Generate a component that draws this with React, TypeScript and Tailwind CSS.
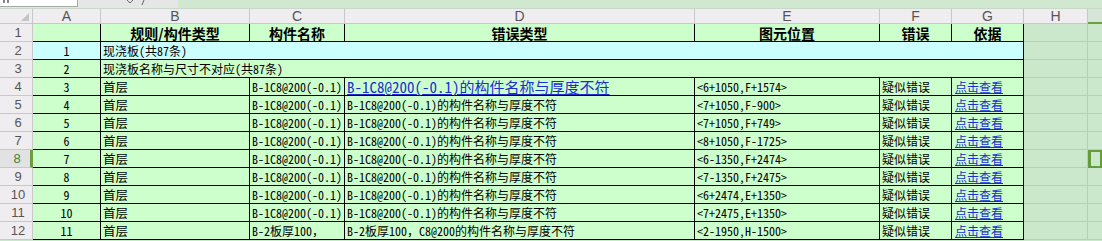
import React from 'react';

const grid = "grid grid-cols-[33px_68px_149px_95px_350px_185px_72px_72px_64px_14px]";
const mono = { fontFamily: '"Noto Sans Mono CJK SC", "Noto Sans CJK SC", monospace' };
const hdrFont = { fontFamily: '"Liberation Sans", Arial, sans-serif' };
const boldFont = { fontFamily: '"Noto Sans CJK SC", sans-serif' };

const rows = [
  { n: 3, c: "B-1C8@200(-0.1)", d: "B-1C8@200(-0.1)的构件名称与厚度不符", e: "<6+1050,F+1574>" },
  { n: 4, c: "B-1C8@200(-0.1)", d: "B-1C8@200(-0.1)的构件名称与厚度不符", e: "<7+1050,F-900>" },
  { n: 5, c: "B-1C8@200(-0.1)", d: "B-1C8@200(-0.1)的构件名称与厚度不符", e: "<7+1050,F+749>" },
  { n: 6, c: "B-1C8@200(-0.1)", d: "B-1C8@200(-0.1)的构件名称与厚度不符", e: "<8+1050,F-1725>" },
  { n: 7, c: "B-1C8@200(-0.1)", d: "B-1C8@200(-0.1)的构件名称与厚度不符", e: "<6-1350,F+2474>" },
  { n: 8, c: "B-1C8@200(-0.1)", d: "B-1C8@200(-0.1)的构件名称与厚度不符", e: "<7-1350,F+2475>" },
  { n: 9, c: "B-1C8@200(-0.1)", d: "B-1C8@200(-0.1)的构件名称与厚度不符", e: "<6+2474,E+1350>" },
  { n: 10, c: "B-1C8@200(-0.1)", d: "B-1C8@200(-0.1)的构件名称与厚度不符", e: "<7+2475,E+1350>" },
  { n: 11, c: "B-2板厚100，", d: "B-2板厚100，C8@200的构件名称与厚度不符", e: "<2-1950,H-1500>" },
];

function RowHead({ n, active }: { n: number; active?: boolean }) {
  return (
    <div
      style={hdrFont}
      className={
        active
          ? "flex items-center justify-center pl-1 text-[13px] leading-none text-[#4b7f2a] bg-[#e2e2e2] border-b border-[#c8c8c8] border-r-[3px] border-r-[#6a9e3f]"
          : "flex items-center justify-center pl-1 text-[13px] leading-none text-[#555] bg-[#efedf0] border-r border-b border-[#c8c8c8]"
      }
    >
      {n}
    </div>
  );
}

function Empty({ selected }: { selected?: boolean }) {
  return (
    <>
      <div className="bg-[#cce8cc] border-r border-b border-[#b3d3b3]" />
      {selected ? (
        <div className="bg-[#cce8cc] border-2 border-l-[3px] border-[#649c3c]" />
      ) : (
        <div className="bg-[#cce8cc] border-b border-[#b3d3b3]" />
      )}
    </>
  );
}

const cell = "flex items-center border-r border-b border-black whitespace-nowrap overflow-hidden leading-[16px]";

export default function App() {
  return (
    <div className="w-[1102px] h-[241px] overflow-hidden bg-[#cce8cc] text-[12px] text-black" style={mono}>
      {/* formula bar strip (only its lower edge is visible) */}
      <div className="flex h-[9px] border-b border-[#c9d9c9] bg-[#e6e6e6]">
        <div className="w-[78px] h-[7px] bg-white border-r border-b border-[#a9a9a9] pl-[3px]">
          <svg width="8" height="4" viewBox="0 0 8 4">
            <path d="M1 0V3M5 0V3" stroke="#333" strokeWidth="1.2" />
          </svg>
        </div>
        <div className="w-[100px] h-[8px] flex gap-[6px] pl-[48px]">
          <svg width="8" height="4" viewBox="0 0 8 4">
            <path d="M1 0L4 3L7 0" stroke="#666" strokeWidth="1" fill="none" />
          </svg>
          <svg width="6" height="5" viewBox="0 0 6 5">
            <path d="M4 0L2 5" stroke="#666" strokeWidth="1" />
          </svg>
        </div>
        <div className="flex-1 h-[8px] bg-[#cfe8cf]" />
      </div>

      {/* column letters */}
      <div className={`${grid} h-[15px] text-[14px] text-[#555]`} style={hdrFont}>
        <div className="relative bg-[#efedf0] border-r border-b border-[#c8c8c8]">
          <svg className="absolute right-[3px] bottom-[2px]" width="8" height="8" viewBox="0 0 8 8">
            <polygon points="8,0 8,8 0,8" fill="#c4c4c4" />
          </svg>
        </div>
        {["A", "B", "C", "D", "E", "F", "G", "H"].map((l) => (
          <div key={l} className="flex items-center justify-center bg-[#efedf0] border-r border-b border-[#c8c8c8] leading-none">
            {l}
          </div>
        ))}
        <div className="bg-[#d6e6d6] border-b-2 border-[#6a9e3f]" />
      </div>

      {/* row 1: headers */}
      <div className={`${grid} h-[18px]`}>
        <RowHead n={1} />
        <div className={`${cell} bg-[#ccffcc]`} />
        {["规则/构件类型", "构件名称", "错误类型", "图元位置", "错误", "依据"].map((h) => (
          <div key={h} style={boldFont} className={`${cell} justify-center bg-[#ccffcc] font-bold text-[14px]`}>
            {h}
          </div>
        ))}
        <Empty />
      </div>

      {/* row 2 */}
      <div className={`${grid} h-[18px]`}>
        <RowHead n={2} />
        <div className={`${cell} justify-center bg-[#ccffff]`}>1</div>
        <div className={`${cell} col-span-6 pl-[2px] bg-[#ccffff]`}>现浇板(共87条)</div>
        <Empty />
      </div>

      {/* row 3 */}
      <div className={`${grid} h-[18px]`}>
        <RowHead n={3} />
        <div className={`${cell} justify-center bg-[#ccffcc]`}>2</div>
        <div className={`${cell} col-span-6 pl-[2px] bg-[#ccffcc]`}>现浇板名称与尺寸不对应(共87条)</div>
        <Empty />
      </div>

      {rows.map((r, i) => (
        <div key={r.n} className={`${grid} h-[18px]`}>
          <RowHead n={r.n + 1} active={r.n + 1 === 8} />
          <div className={`${cell} justify-center bg-[#ccffcc]`}>{r.n}</div>
          <div className={`${cell} pl-[2px] bg-[#ccffcc] text-[12.5px]`}>首层</div>
          <div className={`${cell} pl-[2px] bg-[#ccffcc]`}>{r.c}</div>
          {i === 0 ? (
            <div className="flex items-center border-r border-b border-black whitespace-nowrap pl-[2px] bg-[#ccffcc] text-[15px] leading-[17px] text-[#1a2fd0] underline underline-offset-[1px]">
              {r.d}
            </div>
          ) : (
            <div className={`${cell} pl-[2px] bg-[#ccffcc]`}>{r.d}</div>
          )}
          <div className={`${cell} pl-[2px] bg-[#ccffcc]`}>{r.e}</div>
          <div className={`${cell} pl-[2px] bg-[#ccffcc]`}>疑似错误</div>
          <div className={`${cell} pl-[3px] bg-[#ccffcc] text-[#1a2fd0] underline`}>点击查看</div>
          <Empty selected={r.n + 1 === 8} />
        </div>
      ))}
    </div>
  );
}
